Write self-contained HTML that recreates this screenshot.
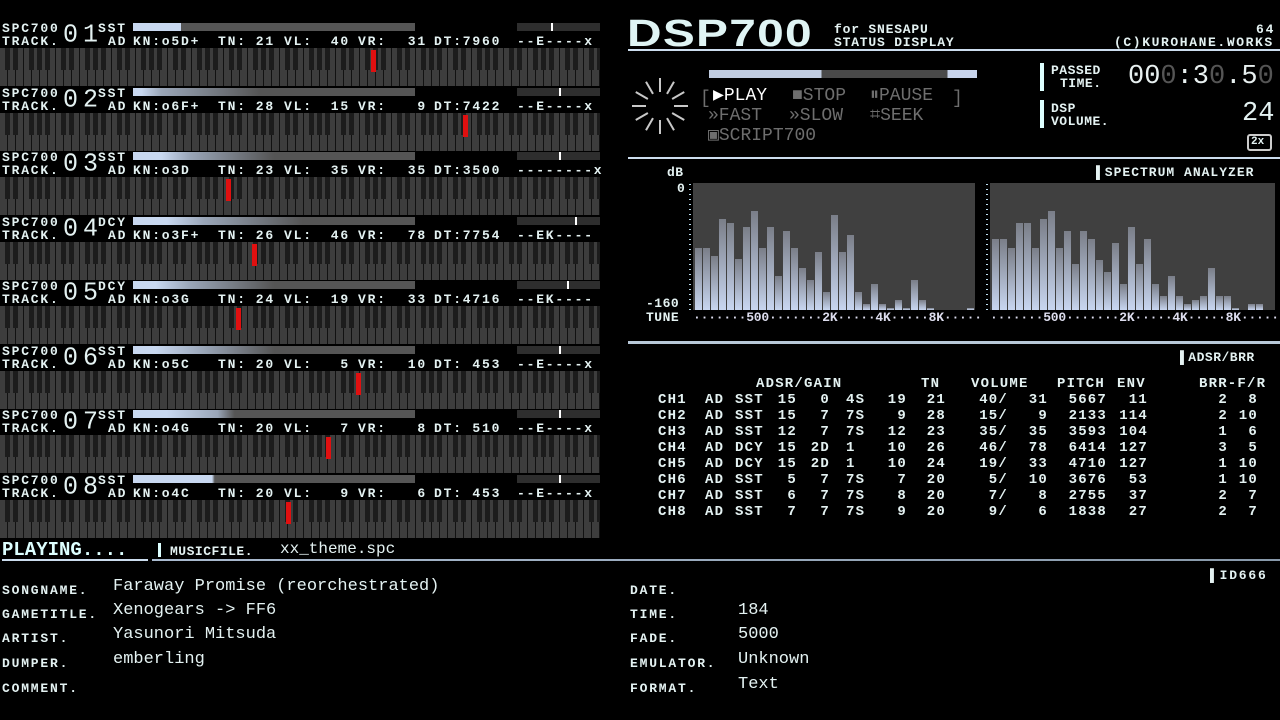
<!DOCTYPE html>
<html><head><meta charset="utf-8">
<style>
*{margin:0;padding:0;box-sizing:border-box}
body{width:1280px;height:720px;background:#000;overflow:hidden;position:relative;font-family:"Liberation Mono",monospace;color:#e4f2f2}
.a{position:absolute;white-space:pre;line-height:1}
.s{font-size:13px;font-weight:bold;letter-spacing:1.8px}
.blk{position:absolute;left:0;width:600px;height:64px}
.blk .a{position:absolute}
.r2{top:15px}
.r1{top:2px}
.kb{position:absolute;left:0;top:28px;width:600px;height:38px}
.vb{position:absolute;left:133px;top:3px;width:282px;height:8px;background:#555}
.mb{position:absolute;left:517px;top:3px;width:83px;height:8px;background:#2e2e2e}
.red{position:absolute;top:30px;width:5px;height:22px;background:#e01010}
.dig{font-size:25px;top:2px;transform:scaleY(1.05)}
.g{color:#6e6e6e}
.bars{position:absolute;display:flex;align-items:flex-end;gap:1px;padding-left:2px;background:#404040}
.bars div{width:7px;background:linear-gradient(to top,#c8d6f0,#7a7e88)}
.row{position:absolute;left:0;width:1280px;height:16px}
.row span{position:absolute;font-size:14px;font-weight:bold;letter-spacing:1.2px;white-space:pre;line-height:1}
.R{text-align:right}
.c1{left:658px}.c2{left:705px}.c3{left:735px}
.c4{left:755px;width:42px;text-align:right}
.c5{left:800px;width:30px;text-align:right}
.c6{left:846px}
.c7{left:870px;width:37px;text-align:right}
.c8{left:910px;width:36px;text-align:right}
.c9{left:960px;width:48px;text-align:right}
.c10{left:1010px;width:38px;text-align:right}
.c11{left:1050px;width:57px;text-align:right}
.c12{left:1110px;width:38px;text-align:right}
.c13{left:1200px;width:28px;text-align:right}
.c14{left:1230px;width:28px;text-align:right}
</style></head><body>
<svg width="0" height="0" style="position:absolute">
<defs><pattern id="kp" width="56" height="38" patternUnits="userSpaceOnUse">
<rect width="56" height="38" fill="#3d3d3d"/>
<g fill="#111"><rect x="7" width="1" height="38"/><rect x="15" width="1" height="38"/><rect x="23" width="1" height="38"/><rect x="31" width="1" height="38"/><rect x="39" width="1" height="38"/><rect x="47" width="1" height="38"/><rect x="55" width="1" height="38"/></g>
<g fill="#1c1c1c"><rect x="5" width="5" height="22"/><rect x="13" width="5" height="22"/><rect x="29" width="5" height="22"/><rect x="37" width="5" height="22"/><rect x="45" width="5" height="22"/></g>
</pattern></defs></svg>

<!-- channel blocks -->
<div class="blk" style="top:20px"><span class="a s r1" style="left:2px">SPC700</span><span class="a dig" style="left:63px">0</span><span class="a dig" style="left:83px">1</span><span class="a s r1" style="left:98px">SST</span><span class="a s r2" style="left:2px">TRACK.</span><span class="a s r2" style="left:108px">AD</span><span class="a s r2" style="left:133px">KN:o5D+</span><span class="a s r2" style="left:218px">TN:</span><span class="a s r2 R" style="left:245px;width:30px">21</span><span class="a s r2" style="left:284px">VL:</span><span class="a s r2 R" style="left:318px;width:32px">40</span><span class="a s r2" style="left:358px">VR:</span><span class="a s r2 R" style="left:395px;width:32px">31</span><span class="a s r2" style="left:434px">DT:7960</span><span class="a s r2" style="left:517px">--E----x</span><div class="vb"><div style="width:48px;height:8px;background:#c8d8f0"></div></div><div class="mb"><div style="position:absolute;left:34px;width:2px;height:8px;background:#fff"></div></div><svg class="kb"><rect width="600" height="38" fill="url(#kp)"/></svg><div class="red" style="left:371px"></div></div>
<div class="blk" style="top:84.5px"><span class="a s r1" style="left:2px">SPC700</span><span class="a dig" style="left:63px">0</span><span class="a dig" style="left:83px">2</span><span class="a s r1" style="left:98px">SST</span><span class="a s r2" style="left:2px">TRACK.</span><span class="a s r2" style="left:108px">AD</span><span class="a s r2" style="left:133px">KN:o6F+</span><span class="a s r2" style="left:218px">TN:</span><span class="a s r2 R" style="left:245px;width:30px">28</span><span class="a s r2" style="left:284px">VL:</span><span class="a s r2 R" style="left:318px;width:32px">15</span><span class="a s r2" style="left:358px">VR:</span><span class="a s r2 R" style="left:395px;width:32px">9</span><span class="a s r2" style="left:434px">DT:7422</span><span class="a s r2" style="left:517px">--E----x</span><div class="vb" style="background:linear-gradient(90deg,#c8d8f0 0,#c8d8f0 3%,#9aa6b8 10%,#555 45%)"></div><div class="mb"><div style="position:absolute;left:42px;width:2px;height:8px;background:#fff"></div></div><svg class="kb"><rect width="600" height="38" fill="url(#kp)"/></svg><div class="red" style="left:463px"></div></div>
<div class="blk" style="top:149px"><span class="a s r1" style="left:2px">SPC700</span><span class="a dig" style="left:63px">0</span><span class="a dig" style="left:83px">3</span><span class="a s r1" style="left:98px">SST</span><span class="a s r2" style="left:2px">TRACK.</span><span class="a s r2" style="left:108px">AD</span><span class="a s r2" style="left:133px">KN:o3D</span><span class="a s r2" style="left:218px">TN:</span><span class="a s r2 R" style="left:245px;width:30px">23</span><span class="a s r2" style="left:284px">VL:</span><span class="a s r2 R" style="left:318px;width:32px">35</span><span class="a s r2" style="left:358px">VR:</span><span class="a s r2 R" style="left:395px;width:32px">35</span><span class="a s r2" style="left:434px">DT:3500</span><span class="a s r2" style="left:517px">--------x</span><div class="vb" style="background:linear-gradient(90deg,#c8d8f0 0,#c8d8f0 10%,#9aa6b8 20%,#555 50%)"></div><div class="mb"><div style="position:absolute;left:42px;width:2px;height:8px;background:#fff"></div></div><svg class="kb"><rect width="600" height="38" fill="url(#kp)"/></svg><div class="red" style="left:226px"></div></div>
<div class="blk" style="top:213.5px"><span class="a s r1" style="left:2px">SPC700</span><span class="a dig" style="left:63px">0</span><span class="a dig" style="left:83px">4</span><span class="a s r1" style="left:98px">DCY</span><span class="a s r2" style="left:2px">TRACK.</span><span class="a s r2" style="left:108px">AD</span><span class="a s r2" style="left:133px">KN:o3F+</span><span class="a s r2" style="left:218px">TN:</span><span class="a s r2 R" style="left:245px;width:30px">26</span><span class="a s r2" style="left:284px">VL:</span><span class="a s r2 R" style="left:318px;width:32px">46</span><span class="a s r2" style="left:358px">VR:</span><span class="a s r2 R" style="left:395px;width:32px">78</span><span class="a s r2" style="left:434px">DT:7754</span><span class="a s r2" style="left:517px">--EK----</span><div class="vb" style="background:linear-gradient(90deg,#c8d8f0 0,#c8d8f0 12%,#9aa6b8 25%,#555 60%)"></div><div class="mb"><div style="position:absolute;left:58px;width:2px;height:8px;background:#fff"></div></div><svg class="kb"><rect width="600" height="38" fill="url(#kp)"/></svg><div class="red" style="left:252px"></div></div>
<div class="blk" style="top:278px"><span class="a s r1" style="left:2px">SPC700</span><span class="a dig" style="left:63px">0</span><span class="a dig" style="left:83px">5</span><span class="a s r1" style="left:98px">DCY</span><span class="a s r2" style="left:2px">TRACK.</span><span class="a s r2" style="left:108px">AD</span><span class="a s r2" style="left:133px">KN:o3G</span><span class="a s r2" style="left:218px">TN:</span><span class="a s r2 R" style="left:245px;width:30px">24</span><span class="a s r2" style="left:284px">VL:</span><span class="a s r2 R" style="left:318px;width:32px">19</span><span class="a s r2" style="left:358px">VR:</span><span class="a s r2 R" style="left:395px;width:32px">33</span><span class="a s r2" style="left:434px">DT:4716</span><span class="a s r2" style="left:517px">--EK----</span><div class="vb" style="background:linear-gradient(90deg,#c8d8f0 0,#c8d8f0 8%,#9aa6b8 20%,#555 50%)"></div><div class="mb"><div style="position:absolute;left:50px;width:2px;height:8px;background:#fff"></div></div><svg class="kb"><rect width="600" height="38" fill="url(#kp)"/></svg><div class="red" style="left:236px"></div></div>
<div class="blk" style="top:342.5px"><span class="a s r1" style="left:2px">SPC700</span><span class="a dig" style="left:63px">0</span><span class="a dig" style="left:83px">6</span><span class="a s r1" style="left:98px">SST</span><span class="a s r2" style="left:2px">TRACK.</span><span class="a s r2" style="left:108px">AD</span><span class="a s r2" style="left:133px">KN:o5C</span><span class="a s r2" style="left:218px">TN:</span><span class="a s r2 R" style="left:245px;width:30px">20</span><span class="a s r2" style="left:284px">VL:</span><span class="a s r2 R" style="left:318px;width:32px">5</span><span class="a s r2" style="left:358px">VR:</span><span class="a s r2 R" style="left:395px;width:32px">10</span><span class="a s r2" style="left:434px">DT: 453</span><span class="a s r2" style="left:517px">--E----x</span><div class="vb" style="background:linear-gradient(90deg,#c8d8f0 0,#c8d8f0 8%,#9aa6b8 25%,#555 50%)"></div><div class="mb"><div style="position:absolute;left:42px;width:2px;height:8px;background:#fff"></div></div><svg class="kb"><rect width="600" height="38" fill="url(#kp)"/></svg><div class="red" style="left:356px"></div></div>
<div class="blk" style="top:407px"><span class="a s r1" style="left:2px">SPC700</span><span class="a dig" style="left:63px">0</span><span class="a dig" style="left:83px">7</span><span class="a s r1" style="left:98px">SST</span><span class="a s r2" style="left:2px">TRACK.</span><span class="a s r2" style="left:108px">AD</span><span class="a s r2" style="left:133px">KN:o4G</span><span class="a s r2" style="left:218px">TN:</span><span class="a s r2 R" style="left:245px;width:30px">20</span><span class="a s r2" style="left:284px">VL:</span><span class="a s r2 R" style="left:318px;width:32px">7</span><span class="a s r2" style="left:358px">VR:</span><span class="a s r2 R" style="left:395px;width:32px">8</span><span class="a s r2" style="left:434px">DT: 510</span><span class="a s r2" style="left:517px">--E----x</span><div class="vb" style="background:linear-gradient(90deg,#c8d8f0 0,#c8d8f0 12%,#9aa6b8 30%,#555 36%)"></div><div class="mb"><div style="position:absolute;left:42px;width:2px;height:8px;background:#fff"></div></div><svg class="kb"><rect width="600" height="38" fill="url(#kp)"/></svg><div class="red" style="left:326px"></div></div>
<div class="blk" style="top:471.5px"><span class="a s r1" style="left:2px">SPC700</span><span class="a dig" style="left:63px">0</span><span class="a dig" style="left:83px">8</span><span class="a s r1" style="left:98px">SST</span><span class="a s r2" style="left:2px">TRACK.</span><span class="a s r2" style="left:108px">AD</span><span class="a s r2" style="left:133px">KN:o4C</span><span class="a s r2" style="left:218px">TN:</span><span class="a s r2 R" style="left:245px;width:30px">20</span><span class="a s r2" style="left:284px">VL:</span><span class="a s r2 R" style="left:318px;width:32px">9</span><span class="a s r2" style="left:358px">VR:</span><span class="a s r2 R" style="left:395px;width:32px">6</span><span class="a s r2" style="left:434px">DT: 453</span><span class="a s r2" style="left:517px">--E----x</span><div class="vb" style="background:linear-gradient(90deg,#c8d8f0 0,#c8d8f0 28%,#555 29%)"></div><div class="mb"><div style="position:absolute;left:42px;width:2px;height:8px;background:#fff"></div></div><svg class="kb"><rect width="600" height="38" fill="url(#kp)"/></svg><div class="red" style="left:286px"></div></div>

<!-- playing line -->
<span class="a" style="left:2px;top:541px;font-size:19px;font-weight:bold;color:#dff">PLAYING....</span>
<div style="position:absolute;left:2px;top:559px;width:146px;height:2px;background:#cde"></div>
<div style="position:absolute;left:158px;top:543px;width:3px;height:14px;background:#dff"></div>
<span class="a s" style="left:170px;top:545px;letter-spacing:0.5px">MUSICFILE.</span>
<span class="a" style="left:280px;top:541px;font-size:16px">xx_theme.spc</span>
<div style="position:absolute;left:152px;top:559px;width:1128px;height:2px;background:linear-gradient(90deg,#aabbd0,#8899aa)"></div>

<!-- song info -->
<span class="a s" style="left:2px;top:584px">SONGNAME.</span><span class="a" style="left:113px;top:578px;font-size:17px">Faraway Promise (reorchestrated)</span>
<span class="a s" style="left:2px;top:608px">GAMETITLE.</span><span class="a" style="left:113px;top:602px;font-size:17px">Xenogears -&gt; FF6</span>
<span class="a s" style="left:2px;top:632px">ARTIST.</span><span class="a" style="left:113px;top:626px;font-size:17px">Yasunori Mitsuda</span>
<span class="a s" style="left:2px;top:657px">DUMPER.</span><span class="a" style="left:113px;top:651px;font-size:17px">emberling</span>
<span class="a s" style="left:2px;top:682px">COMMENT.</span>
<span class="a s" style="left:1210px;top:569px">▌ID666</span>
<span class="a s" style="left:630px;top:584px">DATE.</span>
<span class="a s" style="left:630px;top:608px">TIME.</span><span class="a" style="left:738px;top:602px;font-size:17px">184</span>
<span class="a s" style="left:630px;top:632px">FADE.</span><span class="a" style="left:738px;top:626px;font-size:17px">5000</span>
<span class="a s" style="left:630px;top:657px">EMULATOR.</span><span class="a" style="left:738px;top:651px;font-size:17px">Unknown</span>
<span class="a s" style="left:630px;top:682px">FORMAT.</span><span class="a" style="left:738px;top:676px;font-size:17px">Text</span>

<!-- header -->
<span class="a" style="left:627px;top:15px;font-size:38px;font-family:'Liberation Sans',sans-serif;font-weight:bold;color:#dff4f4;letter-spacing:1px;transform:scaleX(1.26);transform-origin:left">DSP700</span>
<span class="a s" style="left:834px;top:23px;letter-spacing:0.8px">for SNESAPU</span>
<span class="a s" style="left:834px;top:36px;letter-spacing:0.8px">STATUS DISPLAY</span>
<span class="a s" style="left:1256px;top:23px">64</span>
<span class="a s" style="left:1114px;top:36px;letter-spacing:1.6px">(C)KUROHANE.WORKS</span>
<div style="position:absolute;left:628px;top:49px;width:652px;height:2px;background:#cde"></div>

<!-- spinner -->
<svg style="position:absolute;left:628px;top:74px" width="64" height="64" viewBox="-32 -32 64 64">
<g stroke="#c8c8c8" stroke-width="2">
<line x1="0" y1="-14" x2="0" y2="-28" transform="rotate(0)"/><line x1="0" y1="-14" x2="0" y2="-28" transform="rotate(30)"/><line x1="0" y1="-14" x2="0" y2="-28" transform="rotate(60)"/><line x1="0" y1="-14" x2="0" y2="-28" transform="rotate(90)"/><line x1="0" y1="-14" x2="0" y2="-28" transform="rotate(120)"/><line x1="0" y1="-14" x2="0" y2="-28" transform="rotate(150)"/><line x1="0" y1="-14" x2="0" y2="-28" transform="rotate(180)"/><line x1="0" y1="-14" x2="0" y2="-28" transform="rotate(210)"/><line x1="0" y1="-14" x2="0" y2="-28" transform="rotate(240)"/><line x1="0" y1="-14" x2="0" y2="-28" transform="rotate(270)"/><line x1="0" y1="-14" x2="0" y2="-28" transform="rotate(300)"/><line x1="0" y1="-14" x2="0" y2="-28" transform="rotate(330)"/></g></svg>
<div style="position:absolute;left:709px;top:70px;width:268px;height:8px;background:linear-gradient(90deg,#c0cce0 0,#c0cce0 42%,#4a4a4a 42%,#4a4a4a 89%,#c8d4ec 89%)"></div>
<span class="a g" style="left:700px;top:90px;font-size:18px">[</span>
<span class="a g" style="left:952px;top:90px;font-size:18px">]</span>
<span class="a" style="left:713px;top:87px;font-size:18px;color:#fff">▶PLAY</span>
<span class="a g" style="left:792px;top:87px;font-size:18px">■STOP</span>
<span class="a g" style="left:870px;top:87px;font-size:18px">⏸PAUSE</span>
<span class="a g" style="left:708px;top:107px;font-size:18px">»FAST</span>
<span class="a g" style="left:789px;top:107px;font-size:18px">»SLOW</span>
<span class="a g" style="left:870px;top:107px;font-size:18px">⌗SEEK</span>
<span class="a g" style="left:708px;top:127px;font-size:18px">▣SCRIPT700</span>

<div style="position:absolute;left:1040px;top:63px;width:4px;height:28px;background:#dff"></div>
<span class="a s" style="left:1051px;top:64px;letter-spacing:0.5px">PASSED</span>
<span class="a s" style="left:1060px;top:77px;letter-spacing:0.5px">TIME.</span>
<span class="a" style="left:1128px;top:64px;font-size:27px;color:#e8f0f0">00<span style="color:#555">0</span>:3<span style="color:#555">0</span>.5<span style="color:#555">0</span></span>
<div style="position:absolute;left:1040px;top:100px;width:4px;height:28px;background:#dff"></div>
<span class="a s" style="left:1051px;top:102px;letter-spacing:0.5px">DSP</span>
<span class="a s" style="left:1051px;top:115px;letter-spacing:0.5px">VOLUME.</span>
<span class="a" style="left:1242px;top:101px;font-size:27px">24</span>
<span class="a" style="left:1247px;top:134px;width:25px;height:17px;border:2px solid #ccc;border-radius:3px;font-size:11px;font-weight:bold;padding:1px 2px">2x</span>
<div style="position:absolute;left:628px;top:157px;width:652px;height:2px;background:#cde"></div>

<!-- spectrum -->
<span class="a s" style="left:667px;top:166px;letter-spacing:0.5px">dB</span>
<span class="a s" style="left:1096px;top:166px;letter-spacing:1px">▌SPECTRUM ANALYZER</span>
<span class="a s" style="left:677px;top:182px">0</span>
<span class="a s" style="left:646px;top:297px;letter-spacing:0.5px">-160</span>
<div style="position:absolute;left:689px;top:184px;width:2px;height:126px;background:repeating-linear-gradient(#bde 0 1px,transparent 1px 5px)"></div>
<div style="position:absolute;left:986px;top:184px;width:2px;height:126px;background:repeating-linear-gradient(#bde 0 1px,transparent 1px 5px)"></div>
<div class="bars" style="left:693px;top:183px;width:282px;height:127px">
<div style="height:62px"></div><div style="height:62px"></div><div style="height:54px"></div><div style="height:91px"></div><div style="height:87px"></div><div style="height:51px"></div><div style="height:83px"></div><div style="height:99px"></div><div style="height:62px"></div><div style="height:83px"></div><div style="height:34px"></div><div style="height:79px"></div><div style="height:62px"></div><div style="height:42px"></div><div style="height:30px"></div><div style="height:58px"></div><div style="height:18px"></div><div style="height:95px"></div><div style="height:58px"></div><div style="height:75px"></div><div style="height:18px"></div><div style="height:6px"></div><div style="height:26px"></div><div style="height:6px"></div><div style="height:2px"></div><div style="height:10px"></div><div style="height:2px"></div><div style="height:30px"></div><div style="height:10px"></div><div style="height:2px"></div><div style="height:0"></div><div style="height:0"></div><div style="height:0"></div><div style="height:0"></div><div style="height:2px"></div></div>
<div class="bars" style="left:990px;top:183px;width:285px;height:127px">
<div style="height:71px"></div><div style="height:71px"></div><div style="height:62px"></div><div style="height:87px"></div><div style="height:87px"></div><div style="height:62px"></div><div style="height:91px"></div><div style="height:99px"></div><div style="height:62px"></div><div style="height:79px"></div><div style="height:46px"></div><div style="height:79px"></div><div style="height:71px"></div><div style="height:50px"></div><div style="height:38px"></div><div style="height:67px"></div><div style="height:26px"></div><div style="height:83px"></div><div style="height:46px"></div><div style="height:71px"></div><div style="height:26px"></div><div style="height:14px"></div><div style="height:34px"></div><div style="height:14px"></div><div style="height:6px"></div><div style="height:10px"></div><div style="height:14px"></div><div style="height:42px"></div><div style="height:14px"></div><div style="height:14px"></div><div style="height:2px"></div><div style="height:0"></div><div style="height:6px"></div><div style="height:6px"></div></div>
<span class="a s" style="left:646px;top:311px;letter-spacing:0.5px">TUNE</span>
<span class="a s" style="left:693px;top:311px;color:#dde;letter-spacing:-0.2px">·······500·······2K·····4K·····8K·····</span>
<span class="a s" style="left:990px;top:311px;color:#dde;letter-spacing:-0.2px">·······500·······2K·····4K·····8K·····</span>
<div style="position:absolute;left:628px;top:341px;width:652px;height:3px;background:#b8c8d8"></div>

<!-- ADSR -->
<span class="a s" style="left:1180px;top:351px;letter-spacing:0.5px">▌ADSR/BRR</span>
<div class="row" style="top:377px"><span style="left:756px">ADSR/GAIN</span><span style="left:921px">TN</span><span style="left:971px">VOLUME</span><span style="left:1057px">PITCH</span><span style="left:1117px">ENV</span><span style="left:1199px">BRR-F/R</span></div>
<div class="row" style="top:393px"><span class="c1">CH1</span><span class="c2">AD</span><span class="c3">SST</span><span class="c4">15</span><span class="c5">0</span><span class="c6">4S</span><span class="c7">19</span><span class="c8">21</span><span class="c9">40/</span><span class="c10">31</span><span class="c11">5667</span><span class="c12">11</span><span class="c13">2</span><span class="c14">8</span></div>
<div class="row" style="top:409px"><span class="c1">CH2</span><span class="c2">AD</span><span class="c3">SST</span><span class="c4">15</span><span class="c5">7</span><span class="c6">7S</span><span class="c7">9</span><span class="c8">28</span><span class="c9">15/</span><span class="c10">9</span><span class="c11">2133</span><span class="c12">114</span><span class="c13">2</span><span class="c14">10</span></div>
<div class="row" style="top:425px"><span class="c1">CH3</span><span class="c2">AD</span><span class="c3">SST</span><span class="c4">12</span><span class="c5">7</span><span class="c6">7S</span><span class="c7">12</span><span class="c8">23</span><span class="c9">35/</span><span class="c10">35</span><span class="c11">3593</span><span class="c12">104</span><span class="c13">1</span><span class="c14">6</span></div>
<div class="row" style="top:441px"><span class="c1">CH4</span><span class="c2">AD</span><span class="c3">DCY</span><span class="c4">15</span><span class="c5">2D</span><span class="c6">1</span><span class="c7">10</span><span class="c8">26</span><span class="c9">46/</span><span class="c10">78</span><span class="c11">6414</span><span class="c12">127</span><span class="c13">3</span><span class="c14">5</span></div>
<div class="row" style="top:457px"><span class="c1">CH5</span><span class="c2">AD</span><span class="c3">DCY</span><span class="c4">15</span><span class="c5">2D</span><span class="c6">1</span><span class="c7">10</span><span class="c8">24</span><span class="c9">19/</span><span class="c10">33</span><span class="c11">4710</span><span class="c12">127</span><span class="c13">1</span><span class="c14">10</span></div>
<div class="row" style="top:473px"><span class="c1">CH6</span><span class="c2">AD</span><span class="c3">SST</span><span class="c4">5</span><span class="c5">7</span><span class="c6">7S</span><span class="c7">7</span><span class="c8">20</span><span class="c9">5/</span><span class="c10">10</span><span class="c11">3676</span><span class="c12">53</span><span class="c13">1</span><span class="c14">10</span></div>
<div class="row" style="top:489px"><span class="c1">CH7</span><span class="c2">AD</span><span class="c3">SST</span><span class="c4">6</span><span class="c5">7</span><span class="c6">7S</span><span class="c7">8</span><span class="c8">20</span><span class="c9">7/</span><span class="c10">8</span><span class="c11">2755</span><span class="c12">37</span><span class="c13">2</span><span class="c14">7</span></div>
<div class="row" style="top:505px"><span class="c1">CH8</span><span class="c2">AD</span><span class="c3">SST</span><span class="c4">7</span><span class="c5">7</span><span class="c6">7S</span><span class="c7">9</span><span class="c8">20</span><span class="c9">9/</span><span class="c10">6</span><span class="c11">1838</span><span class="c12">27</span><span class="c13">2</span><span class="c14">7</span></div>
</body></html>
